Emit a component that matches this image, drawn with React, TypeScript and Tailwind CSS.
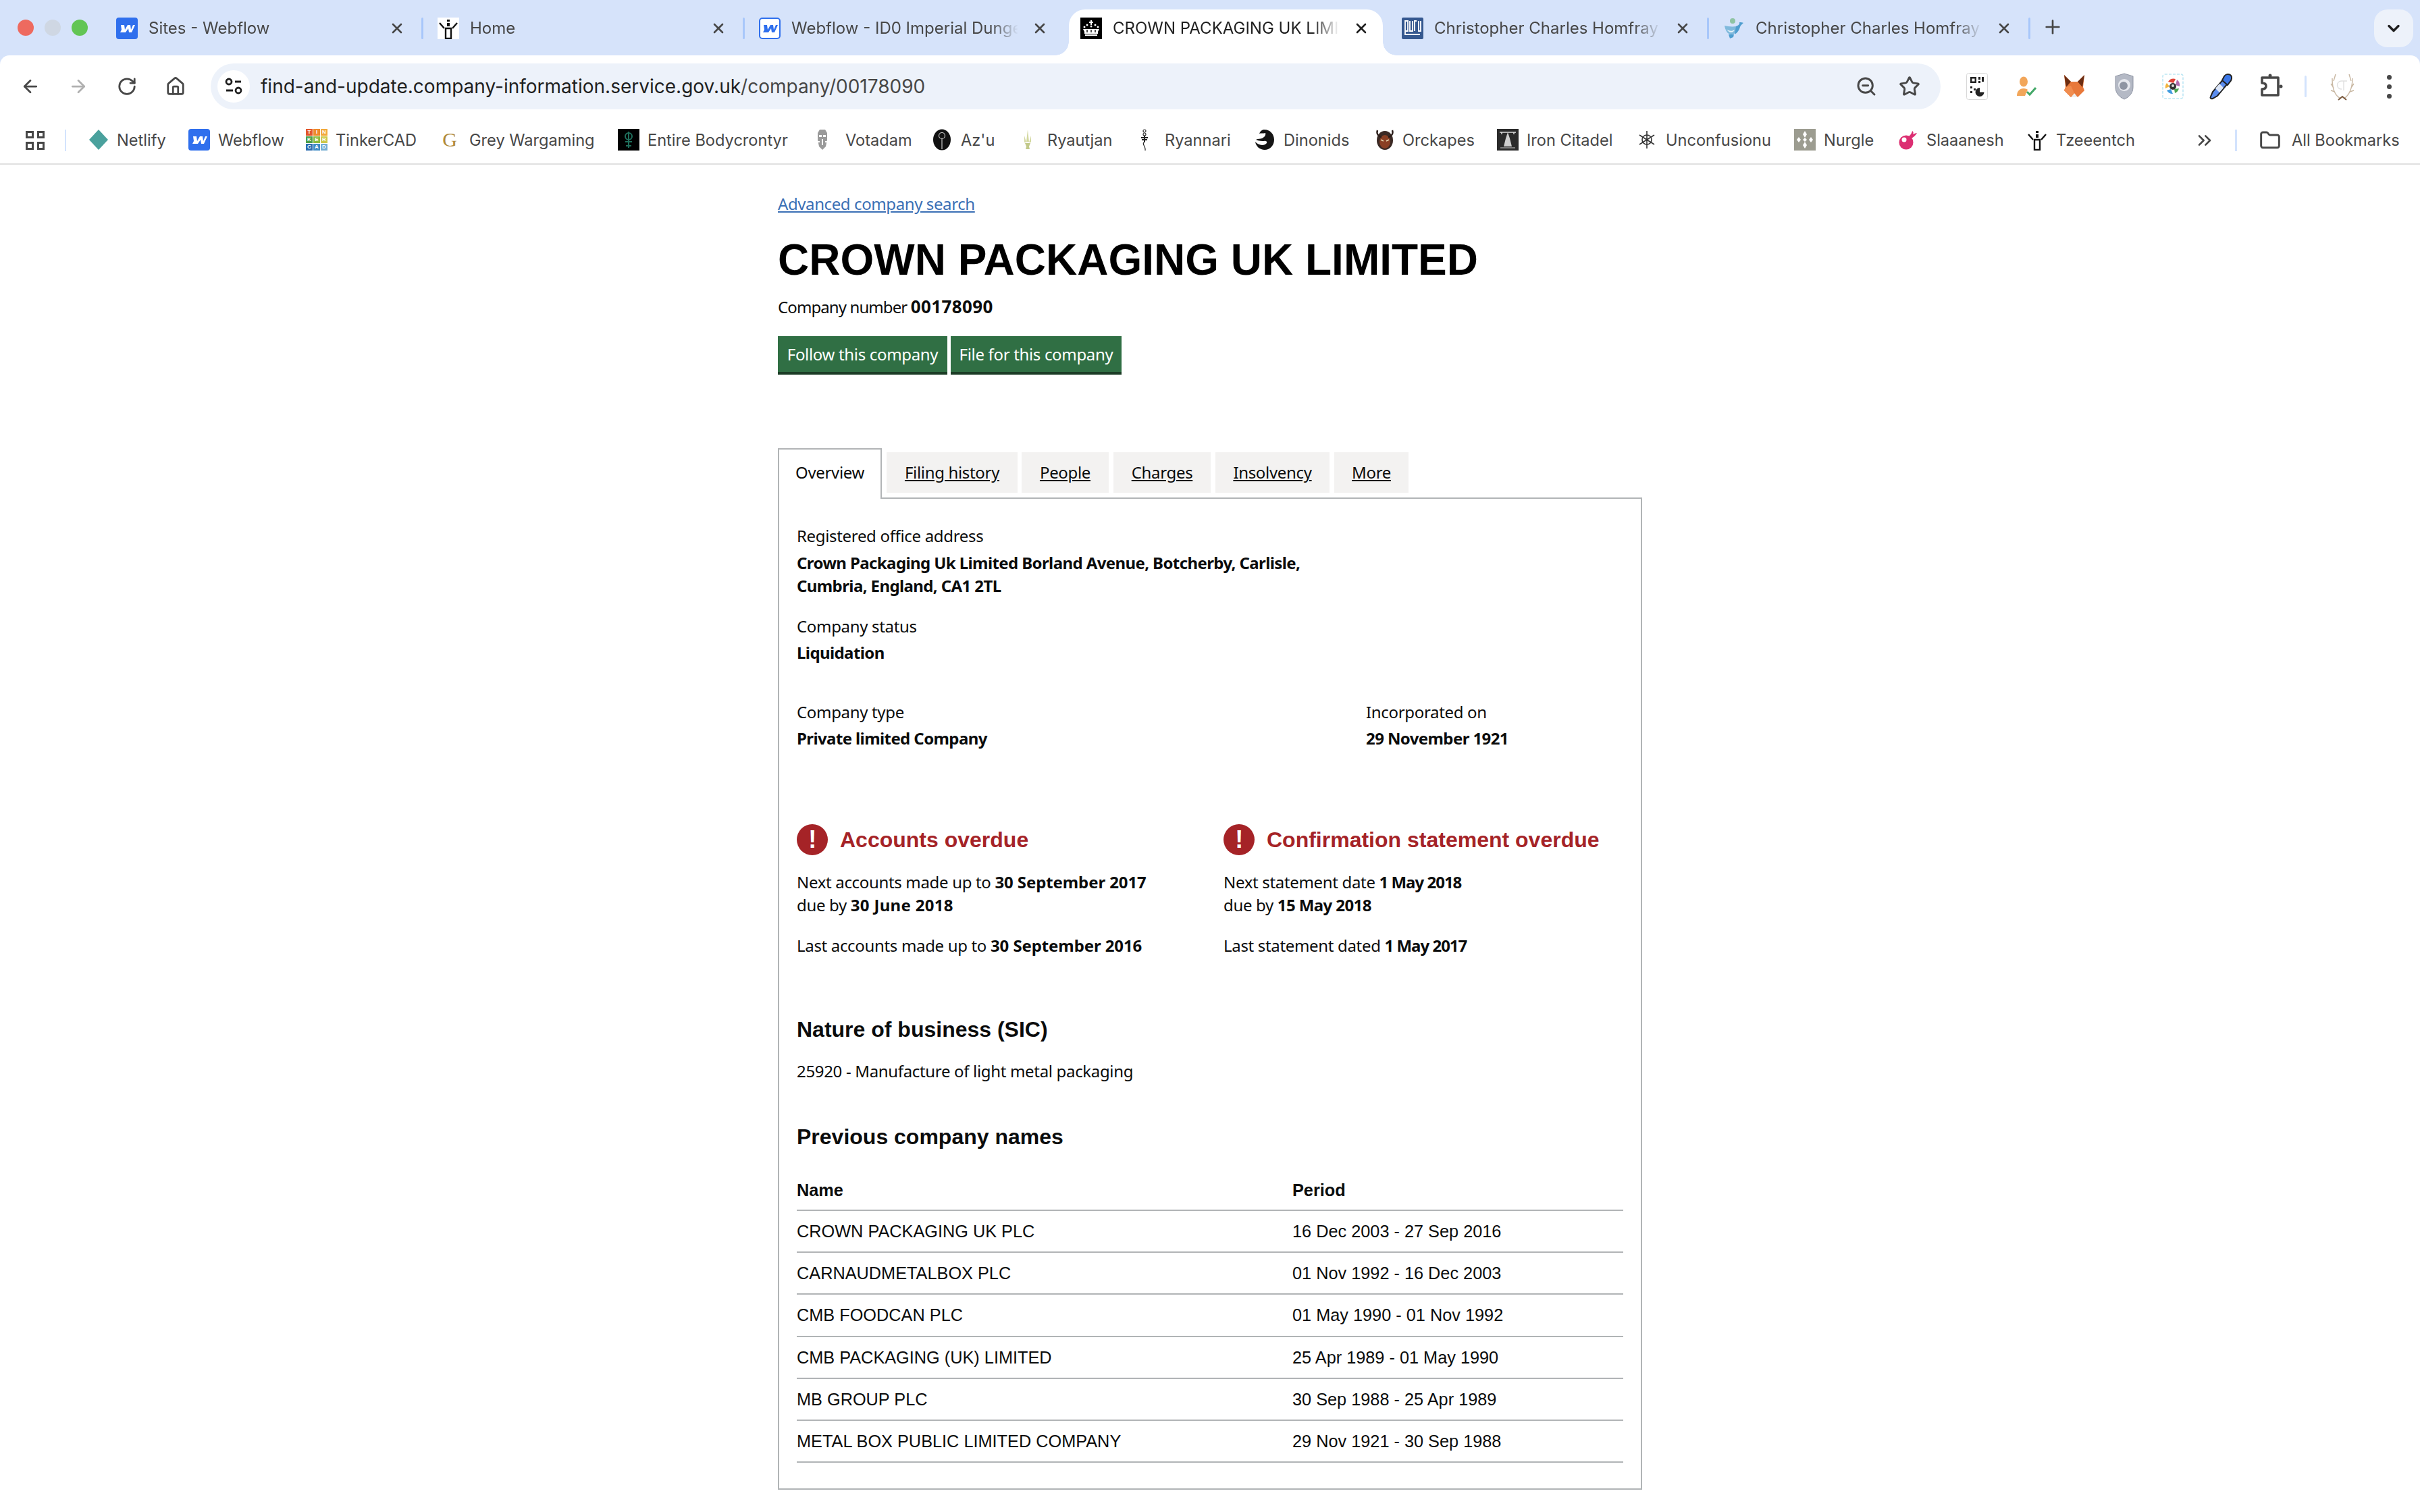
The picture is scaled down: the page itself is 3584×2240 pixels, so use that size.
import React from 'react';
import { ArrowLeft, ArrowRight, RotateCw, Home, X, Plus, ChevronDown, ZoomOut, Star, Folder, ChevronsRight } from 'lucide-react';

const WebflowIcon = ({ outlined = false }: { outlined?: boolean }) => (
  <svg viewBox="0 0 32 32" className="w-8 h-8 shrink-0">
    <rect x={outlined ? 1 : 0} y={outlined ? 1 : 0} width={outlined ? 30 : 32} height={outlined ? 30 : 32} rx="4" fill={outlined ? '#fff' : '#2f6fed'} stroke={outlined ? '#2f6fed' : 'none'} strokeWidth="2" />
    <path d="M7 11h5l1 7 4-7h4l1 7 3-7h3l-5 11h-4l-1-6-4 6H6l2-4z" fill={outlined ? '#2f6fed' : '#fff'} />
  </svg>
);

const TzeentchIcon = () => (
  <svg viewBox="0 0 32 32" className="w-8 h-8 shrink-0 bg-white">
    <path d="M3 8l7 8M29 8l-7 8" stroke="#111" strokeWidth="2.4" fill="none" />
    <path d="M11 16h10M12 16v15h8V16" stroke="#111" strokeWidth="2.4" fill="none" />
    <path d="M14 3h4v3h-4zM14 8h4v5h-4z" fill="#111" />
  </svg>
);

const CrownIcon = () => (
  <svg viewBox="0 0 32 32" className="w-8 h-8 shrink-0 bg-black">
    <path d="M15 4h2v2h2v2h-2v3h-2V8h-2V6h2z" fill="#fff" />
    <circle cx="6" cy="14" r="1.5" fill="#fff" /><circle cx="26" cy="14" r="1.5" fill="#fff" /><circle cx="10" cy="11" r="1.5" fill="#fff" /><circle cx="22" cy="11" r="1.5" fill="#fff" /><circle cx="16" cy="13" r="1.5" fill="#fff" />
    <path d="M4 17h24l-2 4v3H6v-3zM7 25h18v2H7z" fill="#fff" />
    <path d="M10 18v4M16 18v4M22 18v4" stroke="#000" strokeWidth="1.4" />
  </svg>
);

const GuruIcon = () => (
  <svg viewBox="0 0 32 32" className="w-8 h-8 shrink-0">
    <rect width="32" height="32" rx="2" fill="#35588f" />
    <path d="M5 5h4v15H5zM5 20v5h22M12 5v15h4V5M19 20V5h3M25 5v15h3V5" stroke="#fff" strokeWidth="1.8" fill="none" />
  </svg>
);

const WhaleIcon = () => (
  <svg viewBox="0 0 32 32" className="w-8 h-8 shrink-0">
    <circle cx="14" cy="5" r="4" fill="#8fc4a4" />
    <path d="M2 12c5 1 11 2 17 1 3 6-1 12-7 12C6 25 3 18 2 12z" fill="#7fb9dc" />
    <path d="M19 13c3-1 6-3 5-6 2 0 5 0 6 1-2 2-4 3-5 6-1 4-4 9-8 11z" fill="#4f9ecf" />
    <path d="M8 25l2 6 5-2 1-4z" fill="#4f9ecf" />
    <path d="M5 17c3 3 8 4 12 1-2 5-8 6-12-1z" fill="#e4f1f8" />
  </svg>
);

const NetlifyIcon = () => (
  <svg viewBox="0 0 32 32" className="w-8 h-8 shrink-0"><path d="M16 1l14 15-14 15L2 16z" fill="#4aa19d" /></svg>
);

const TinkerIcon = () => (
  <div className="w-8 h-8 shrink-0 grid grid-cols-3 grid-rows-3 gap-[1px] font-['Liberation_Sans',sans-serif] text-[8px] font-bold leading-[10px] text-white text-center">
    <span className="bg-[#e2572d]">T</span><span className="bg-[#ee8a2c]">I</span><span className="bg-[#f2a93b]">N</span>
    <span className="bg-[#4f9f4b]">K</span><span className="bg-[#8dbb3f]">E</span><span className="bg-[#cdc84a]">R</span>
    <span className="bg-[#2c6db0]">C</span><span className="bg-[#3f8cc6]">A</span><span className="bg-[#73add2]">D</span>
  </div>
);

const GreyIcon = () => (
  <span className="w-8 h-8 shrink-0 -ml-[5px] text-center font-['Liberation_Serif',serif] text-[30px] leading-[32px] text-[#b08a3a]">G</span>
);

const EntireIcon = () => (
  <svg viewBox="0 0 32 32" className="w-8 h-8 shrink-0 bg-black">
    <circle cx="16" cy="11" r="5" fill="none" stroke="#1f6f5c" strokeWidth="2" />
    <path d="M16 4v24M11 19h10M12 25h8" stroke="#1f6f5c" strokeWidth="2" />
  </svg>
);

const VotadamIcon = () => (
  <svg viewBox="0 0 32 32" className="w-8 h-8 shrink-0 -ml-[7px]">
    <path d="M12 1h8l3 5v10l-2 10-5 5-5-5-2-10V6z" fill="#9a9a9a" />
    <path d="M11 9h4v3h-4zM17 9h4v3h-4zM15 15h2v9h-2zM9 18h3v2H9zM20 18h3v2h-3z" fill="#fff" />
  </svg>
);

const AzuIcon = () => (
  <svg viewBox="0 0 32 32" className="w-8 h-8 shrink-0">
    <ellipse cx="16" cy="16" rx="13" ry="15.5" fill="#111" />
    <circle cx="16" cy="10" r="4.5" fill="none" stroke="#ccc" strokeWidth="1.2" />
    <path d="M16 14.5V30" stroke="#ccc" strokeWidth="1.2" />
  </svg>
);

const RyautjanIcon = () => (
  <svg viewBox="0 0 32 32" className="w-8 h-8 shrink-0 -ml-[5px]">
    <path d="M16 1l2 18h-4zM11 10l3 10h-3zM21 10l-3 10h3z" fill="#d3d8a0" />
    <path d="M12 21h8l-2 5 1 4h-6l1-4z" fill="#c2c98a" />
  </svg>
);

const RyannariIcon = () => (
  <svg viewBox="0 0 32 32" className="w-8 h-8 shrink-0 -ml-[12px]">
    <circle cx="16" cy="3" r="2" fill="none" stroke="#333" strokeWidth="1.2" />
    <circle cx="16" cy="8" r="2" fill="none" stroke="#333" strokeWidth="1.2" />
    <path d="M11 13h10M12 16h8M16 10v10" stroke="#222" strokeWidth="2" />
    <path d="M15 20c-3 3 3 5 2 12" fill="none" stroke="#222" strokeWidth="1.2" />
  </svg>
);

const DinonidsIcon = () => (
  <svg viewBox="0 0 32 32" className="w-8 h-8 shrink-0">
    <path d="M14 1c9-1 16 6 16 15 0 9-7 15-14 15C9 31 3 26 2 19c4 5 13 7 17 2 1-2-1-4-4-3-3 0-7 0-12-2 3-2 6-1 9-2 4-2 6-5 5-8-3 1-7 0-9 1 1-3 3-5 6-6z" fill="#151515" />
  </svg>
);

const OrckapesIcon = () => (
  <svg viewBox="0 0 32 32" className="w-8 h-8 shrink-0">
    <ellipse cx="16" cy="17" rx="12" ry="14" fill="#3b2a25" />
    <ellipse cx="16" cy="19" rx="8" ry="10" fill="#8a3f23" />
    <path d="M5 2c-2 6 2 9 6 10M27 2c2 6-2 9-6 10" stroke="#2a1d1a" strokeWidth="2.4" fill="none" />
    <path d="M10 16l4 2M22 16l-4 2" stroke="#e8d7b0" strokeWidth="1.6" />
  </svg>
);

const IronIcon = () => (
  <svg viewBox="0 0 32 32" className="w-8 h-8 shrink-0 bg-[#2b2b2b]">
    <path d="M4 5h24M7 5v3M25 5v3" stroke="#ddd" strokeWidth="1.5" />
    <path d="M16 5l3 9 3 12H10l3-12z" fill="#cfcfcf" />
    <path d="M5 28h22" stroke="#999" strokeWidth="1.5" />
  </svg>
);

const UnconfusIcon = () => (
  <svg viewBox="0 0 32 32" className="w-8 h-8 shrink-0 -ml-[4px]" stroke="#333" strokeWidth="1.6" fill="none">
    <path d="M16 3v26M5 9l22 14M27 9L5 23" />
    <circle cx="16" cy="16" r="7" />
  </svg>
);

const NurgleIcon = () => (
  <div className="w-8 h-8 shrink-0 bg-[#9c9c90] flex items-center justify-center">
    <svg viewBox="0 0 32 32" className="w-8 h-8" fill="#fff">
      <path d="M16 3l3 5-3 5-3-5zM16 19l3 5-3 5-3-5zM7 12l3 4-3 4-3-4zM25 12l3 4-3 4-3-4zM16 13l3 3-3 3-3-3z" />
    </svg>
  </div>
);

const SlaaneshIcon = () => (
  <svg viewBox="0 0 32 32" className="w-8 h-8 shrink-0">
    <circle cx="12" cy="20" r="10.5" fill="#dc2f72" />
    <circle cx="9" cy="16" r="3.5" fill="#fff" />
    <path d="M14 13c3-3 6-5 7-10 2 1 2 3 1 5 2-1 4-2 6-2-2 4-6 7-10 9z" fill="#dc2f72" />
  </svg>
);

const QrIcon = () => (
  <svg viewBox="0 0 32 40" className="w-8 h-10 shrink-0">
    <rect x=".5" y=".5" width="31" height="39" rx="3" fill="#fff" stroke="#d8d8d8" />
    <path d="M6 6h9v9H6zM8.500 8.500v4h4v-4zM18 6h3v4h-3zM23 6h3v7h-3zM18 12h3v3h-3zM6 20h3v3H6zM11 23h3v3h-3zM6 27h3v3H6zM15 28h3v3h-3z" fill="#222" fillRule="evenodd" />
    <path d="M20 22a6.500 6.500 0 1 0 6.500 6.500H20z" fill="#222" />
  </svg>
);

const PersonIcon = () => (
  <svg viewBox="0 0 32 32" className="w-8 h-8 shrink-0">
    <ellipse cx="12" cy="9" rx="6" ry="7.500" fill="#f2a65a" />
    <path d="M2 30c0-7 4-11 10-11 3 0 5 1 6 2l-4 9z" fill="#f2a65a" />
    <path d="M17 24l4 4 9-10" fill="none" stroke="#43a868" strokeWidth="3" />
  </svg>
);

const FoxIcon = () => (
  <svg viewBox="0 0 32 36" className="w-8 h-9 shrink-0">
    <path d="M1 1l10 10h10L31 1l-2 18 2 5-10 10h-10L1 24l2-5z" fill="#e8783a" />
    <path d="M1 1l10 10-7 8zM31 1L21 11l7 8z" fill="#6b2d13" />
    <path d="M11 34l5-6 5 6z" fill="#eee" />
    <path d="M3 19l8-2 5 11-5 6L1 24z" fill="#f08c4f" />
  </svg>
);

const ShieldIcon = () => (
  <svg viewBox="0 0 28 40" className="w-[28px] h-10 shrink-0">
    <path d="M14 1l13 4v16c0 9-6 15-13 18C7 36 1 30 1 21V5z" fill="#b4b9c5" stroke="#8e94a3" />
    <circle cx="14" cy="18" r="9" fill="#e6e8ee" />
    <circle cx="13" cy="19" r="6" fill="#8f95a3" />
  </svg>
);

const LensIcon = () => (
  <svg viewBox="0 0 32 40" className="w-8 h-10 shrink-0">
    <rect x="1" y="2" width="30" height="36" rx="3" fill="none" stroke="#bde7f4" strokeWidth="1.6" strokeDasharray="4 2" />
    <path d="M9 13a10 10 0 0 1 11-4l-3 6z" fill="#e0453a" />
    <path d="M22 10a10 10 0 0 1 4 10l-6-2z" fill="#b06bb0" />
    <path d="M25 23a10 10 0 0 1-6 7l-1-6z" fill="#4aa755" />
    <path d="M16 31a10 10 0 0 1-9-5l6-2z" fill="#3f9bdf" />
    <path d="M5 23a10 10 0 0 1 2-8l4 5z" fill="#f2b540" />
    <circle cx="16" cy="20" r="5" fill="#333" /><circle cx="16" cy="19" r="2" fill="#ddd" />
  </svg>
);

const DropperIcon = () => (
  <svg viewBox="0 0 34 40" className="w-[34px] h-10 shrink-0">
    <path d="M21 9l6 7L12 34l-7 4c-3 1-4-1-3-3l3-7z" fill="#5b8def" stroke="#222" strokeWidth="2" />
    <path d="M15 16l6 6-6 7-6-6z" fill="#dce6f8" />
    <path d="M19 11l8 7 3-4c4-4 4-9 1-11s-7-1-9 2z" fill="#3c78e8" stroke="#222" strokeWidth="2" />
  </svg>
);

const ExtensionsIcon = () => (
  <svg viewBox="0 0 36 40" className="w-9 h-10 shrink-0" fill="none" stroke="#474747" strokeWidth="3.600" strokeLinejoin="round">
    <path d="M4 7h24v26H4V24c4 0 6-2 6-4.500S8 15 4 15z" />
    <circle cx="16" cy="4" r="2.500" fill="#474747" stroke="none" />
    <circle cx="32" cy="20" r="2.500" fill="#474747" stroke="none" />
  </svg>
);

const AntlerIcon = () => (
  <svg viewBox="0 0 36 44" className="w-9 h-11 shrink-0" fill="none">
    <path d="M16 40C6 36 3 24 3 10M5 24l-4-6M7 30L1 28M5 14l3-10M20 40c8-4 13-16 13-30M31 24l4-6M29 30l6-2M31 14l-3-10" stroke="#c9b8a3" strokeWidth="1.400" />
    <path d="M12 42l6-5 6 5" stroke="#7a5a3e" strokeWidth="2" />
    <path d="M16 14a6 6 0 1 0 1 12M16 14h9M20 14v14" stroke="#e0e0e0" strokeWidth="1.400" />
  </svg>
);

const TuneIcon = () => (
  <svg viewBox="0 0 48 48" className="w-12 h-12" fill="none" stroke="#1f1f1f" strokeWidth="2.800">
    <circle cx="17" cy="17" r="4" />
    <path d="M26 17h9M13 30h10" />
    <circle cx="31" cy="30" r="4" />
  </svg>
);

const tabs = [
  { title: 'Sites - Webflow', icon: <WebflowIcon /> },
  { title: 'Home', icon: <TzeentchIcon /> },
  { title: 'Webflow - ID0 Imperial Dungeon', icon: <WebflowIcon outlined /> },
  { title: 'CROWN PACKAGING UK LIMITED', icon: <CrownIcon />, active: true },
  { title: 'Christopher Charles Homfray', icon: <GuruIcon /> },
  { title: 'Christopher Charles Homfray', icon: <WhaleIcon /> },
];

const bookmarks = [
  { label: 'Netlify', icon: <NetlifyIcon />, cls: 'w-[149px] gap-[11px]' },
  { label: 'Webflow', icon: <WebflowIcon />, cls: 'w-[174px] gap-[12px]' },
  { label: 'TinkerCAD', icon: <TinkerIcon />, cls: 'w-[202px] gap-[12px]' },
  { label: 'Grey Wargaming', icon: <GreyIcon />, cls: 'w-[260px] gap-[13px]' },
  { label: 'Entire Bodycrontyr', icon: <EntireIcon />, cls: 'w-[294px] gap-[12px]' },
  { label: 'Votadam', icon: <VotadamIcon />, cls: 'w-[170px] gap-[18px]' },
  { label: "Az'u", icon: <AzuIcon />, cls: 'w-[132px] gap-[12px]' },
  { label: 'Ryautjan', icon: <RyautjanIcon />, cls: 'w-[180px] gap-[13px]' },
  { label: 'Ryannari', icon: <RyannariIcon />, cls: 'w-[166px] gap-[14px]' },
  { label: 'Dinonids', icon: <DinonidsIcon />, cls: 'w-[178px] gap-[12px]' },
  { label: 'Orckapes', icon: <OrckapesIcon />, cls: 'w-[182px] gap-[10px]' },
  { label: 'Iron Citadel', icon: <IronIcon />, cls: 'w-[210px] gap-[12px]' },
  { label: 'Unconfusionu', icon: <UnconfusIcon />, cls: 'w-[230px] gap-[12px]' },
  { label: 'Nurgle', icon: <NurgleIcon />, cls: 'w-[154px] gap-[12px]' },
  { label: 'Slaaanesh', icon: <SlaaneshIcon />, cls: 'w-[190px] gap-[10px]' },
  { label: 'Tzeeentch', icon: <TzeentchIcon />, cls: 'w-[248px] gap-[12px]' },
];

const previousNames = [
  ['CROWN PACKAGING UK PLC', '16 Dec 2003 - 27 Sep 2016'],
  ['CARNAUDMETALBOX PLC', '01 Nov 1992 - 16 Dec 2003'],
  ['CMB FOODCAN PLC', '01 May 1990 - 01 Nov 1992'],
  ['CMB PACKAGING (UK) LIMITED', '25 Apr 1989 - 01 May 1990'],
  ['MB GROUP PLC', '30 Sep 1988 - 25 Apr 1989'],
  ['METAL BOX PUBLIC LIMITED COMPANY', '29 Nov 1921 - 30 Sep 1988'],
];

const pageTabs = [
  { label: 'Filing history', cls: 'w-[194px] ml-[7px]' },
  { label: 'People', cls: 'w-[129px] ml-[6px]' },
  { label: 'Charges', cls: 'w-[144px] ml-[7px]' },
  { label: 'Insolvency', cls: 'w-[169px] ml-[7px]' },
  { label: 'More', cls: 'w-[110px] ml-[7px]' },
];

const WarnIcon = () => (
  <span className="w-[46px] h-[46px] shrink-0 rounded-full bg-[#a52327] flex items-center justify-center text-white font-['Liberation_Sans',sans-serif] font-bold text-[36px] leading-none">!</span>
);

const bodyFont = "font-['Noto_Sans',sans-serif] text-[24px] leading-[34px] tracking-[-0.33px] text-[#0b0c0c]";
const strongTight = 'font-bold tracking-[-0.6px]';
const strongWide = 'font-bold tracking-[-0.1px]';

function OverdueBlock({ title, next, due, last }: { title: string; next: React.ReactNode; due: React.ReactNode; last: React.ReactNode }) {
  return (
    <div>
      <div className="flex items-center h-[46px] gap-[18px]">
        <WarnIcon />
        <h2 className="font-['Liberation_Sans',sans-serif] font-bold text-[32px] tracking-normal text-[#a52327]">{title}</h2>
      </div>
      <p className="mt-[23px]">{next}</p>
      <p>{due}</p>
      <p className="mt-[26px]">{last}</p>
    </div>
  );
}

export default function App() {
  return (
    <div className="w-[3584px] h-[2240px] overflow-hidden bg-white">
      <div className="bg-[#d6e3fa]">
        {/* tab strip */}
        <div className="relative h-[82px] flex">
          <div className="w-[148px] shrink-0 flex items-center pl-[26px] gap-[16px]">
            <span className="w-6 h-6 rounded-full bg-[#ee6a5f]" />
            <span className="w-6 h-6 rounded-full bg-[#cfd7e3]" />
            <span className="w-6 h-6 rounded-full bg-[#62c554]" />
          </div>
          {tabs.map((tab, i) => (
            <div key={i} className="relative w-[476px] shrink-0 h-[82px] flex items-center pl-[24px] pt-[2px]">
              {tab.active && (
                <>
                  <div className="absolute left-[7px] right-[4px] top-[14px] bottom-0 bg-white rounded-t-[24px]" />
                  <div className="absolute left-[-13px] bottom-0 w-[20px] h-[20px] bg-[radial-gradient(circle_at_0_0,#d6e3fa_19.5px,#fff_20px)]" />
                  <div className="absolute right-[-16px] bottom-0 w-[20px] h-[20px] bg-[radial-gradient(circle_at_100%_0,#d6e3fa_19.5px,#fff_20px)]" />
                </>
              )}
              <div className="relative flex items-center">
                {tab.icon}
                <span className={`ml-[16px] w-[336px] overflow-hidden whitespace-nowrap font-['Inter',sans-serif] text-[24px] leading-[32px] [mask-image:linear-gradient(to_right,#000_88%,transparent)] ${tab.active ? 'text-[#1f1f1f]' : 'text-[#474747]'}`}>{tab.title}</span>
                <X className={`ml-[20px] w-6 h-6 ${tab.active ? 'text-[#1f1f1f]' : 'text-[#474747]'}`} strokeWidth={2.6} />
                {i < tabs.length - 1 && !tab.active && tabs[i + 1]?.active !== true ? (
                  <span className="ml-[24px] w-[3px] h-[32px] rounded bg-[#a8c7fa]" />
                ) : null}
                {i === tabs.length - 1 && <span className="ml-[24px] w-[3px] h-[32px] rounded bg-[#a8c7fa]" />}
              </div>
            </div>
          ))}
          <Plus className="ml-[20px] mt-[24px] w-8 h-8 text-[#474747]" strokeWidth={2} />
          <div className="absolute right-[10px] top-[14px] w-[58px] h-[56px] rounded-[20px] bg-[#edf2fa] flex items-center justify-center">
            <ChevronDown className="w-7 h-7 text-[#1f1f1f]" strokeWidth={3} />
          </div>
        </div>

        {/* address bar */}
        <div className="relative h-[82px] bg-white rounded-t-[14px] flex items-center pt-[10px] pl-[30px]">
          <ArrowLeft className="w-[30px] h-[30px] text-[#474747]" strokeWidth={2.2} />
          <ArrowRight className="ml-[41px] w-[30px] h-[30px] text-[#b0b0b0]" strokeWidth={2.2} />
          <RotateCw className="ml-[42px] w-[30px] h-[30px] text-[#474747]" strokeWidth={2.2} />
          <Home className="ml-[42px] w-[30px] h-[30px] text-[#474747]" strokeWidth={2.2} />
          <div className="ml-[37px] w-[2562px] h-[68px] rounded-full bg-[#edf2fa] flex items-center pl-[10px]">
            <span className="w-12 h-12 rounded-full bg-white flex items-center justify-center">
              <TuneIcon />
            </span>
            <span className="ml-[16px] font-['Inter',sans-serif] text-[28px] text-[#1f1f1f] whitespace-nowrap">
              find-and-update.company-information.service.gov.uk<span className="text-[#474747]">/company/00178090</span>
            </span>
            <div className="ml-auto flex items-center gap-[32px] pr-[30px]">
              <ZoomOut className="w-8 h-8 text-[#474747]" strokeWidth={2.2} />
              <Star className="w-8 h-8 text-[#474747]" strokeWidth={2.2} />
            </div>
          </div>
          <div className="ml-[38px] flex items-center">
            <QrIcon />
            <div className="ml-[41px]"><PersonIcon /></div>
            <div className="ml-[39px]"><FoxIcon /></div>
            <div className="ml-[44px]"><ShieldIcon /></div>
            <div className="ml-[42px]"><LensIcon /></div>
            <div className="ml-[38px]"><DropperIcon /></div>
            <div className="ml-[40px]"><ExtensionsIcon /></div>
            <span className="ml-[31px] w-[3px] h-[32px] rounded bg-[#d3e3fd]" />
            <div className="ml-[35px]"><AntlerIcon /></div>
            <div className="ml-[48px] flex flex-col gap-[7px]">
              <span className="w-[7px] h-[7px] rounded-full bg-[#474747]" />
              <span className="w-[7px] h-[7px] rounded-full bg-[#474747]" />
              <span className="w-[7px] h-[7px] rounded-full bg-[#474747]" />
            </div>
          </div>
        </div>
      </div>

      {/* bookmarks */}
      <div className="h-[80px] bg-white border-b-2 border-[#e0e0e0] flex items-center pl-[38px] pt-[9px] font-['Inter',sans-serif] text-[23.6px] text-[#474747] whitespace-nowrap">
        <div className="w-[28px] h-[28px] grid grid-cols-2 gap-[5px]">
          <span className="border-[3px] border-[#474747]" />
          <span className="border-[3px] border-[#474747]" />
          <span className="border-[3px] border-[#474747]" />
          <span className="border-[3px] border-[#474747]" />
        </div>
        <span className="ml-[30px] mr-[32px] w-[2px] h-[32px] bg-[#d3e3fd]" />
        {bookmarks.map((b) => (
          <div key={b.label} className={`${b.cls} shrink-0 flex items-center`}>
            {b.icon}
            <span>{b.label}</span>
          </div>
        ))}
        <ChevronsRight className="w-8 h-8 text-[#474747]" strokeWidth={2} />
        <span className="ml-[29px] w-[3px] h-[32px] bg-[#d3e3fd]" />
        <Folder className="ml-[33px] w-8 h-8 text-[#474747]" strokeWidth={2.2} />
        <span className="ml-[16px]">All Bookmarks</span>
      </div>

      {/* page */}
      <main className={`w-[1280px] mx-auto pt-[42px] ${bodyFont}`}>
        <a className="block leading-[32px] tracking-[-0.4px] text-[#3a6fb5] underline">Advanced company search</a>
        <h1 className="mt-[31px] font-['Liberation_Sans',sans-serif] font-bold text-[64px] leading-[72px] tracking-normal text-black">CROWN PACKAGING UK LIMITED</h1>
        <p className="mt-[17px] leading-[32px] tracking-[-0.9px]">Company number <strong className="font-bold text-[26px] tracking-[0.4px]">00178090</strong></p>
        <div className="mt-[27px] flex gap-[5px]">
          <button className="w-[251px] h-[53px] mb-[4px] bg-[#306f44] text-white shadow-[0_4px_0_#1c3d26]">Follow this company</button>
          <button className="w-[253px] h-[53px] mb-[4px] bg-[#306f44] text-white shadow-[0_4px_0_#1c3d26]">File for this company</button>
        </div>

        <div className="mt-[109px] h-[73px] flex items-start relative">
          <div className="relative z-10 w-[154px] h-[75px] bg-white border-2 border-b-0 border-[#b1b4b6] flex items-center justify-center pb-[6px]">Overview</div>
          {pageTabs.map((t) => (
            <div key={t.label} className={`${t.cls} mt-[6px] h-[60px] bg-[#f3f2f1] flex items-center justify-center underline`}>{t.label}</div>
          ))}
        </div>

        <section className="border-2 border-[#b1b4b6] px-[26px] pt-[38px] pb-[38px]">
          <p>Registered office address</p>
          <p className={`mt-[6px] w-[800px] ${strongTight}`}>Crown Packaging Uk Limited Borland Avenue, Botcherby, Carlisle, Cumbria, England, CA1 2TL</p>
          <p className="mt-[26px]">Company status</p>
          <p className={`mt-[5px] ${strongTight}`}>Liquidation</p>
          <div className="mt-[54px] grid grid-cols-[843px_1fr]">
            <div>
              <p>Company type</p>
              <p className={`mt-[5px] ${strongTight}`}>Private limited Company</p>
            </div>
            <div>
              <p>Incorporated on</p>
              <p className={`mt-[5px] ${strongTight}`}>29 November 1921</p>
            </div>
          </div>

          <div className="mt-[110px] grid grid-cols-[632px_1fr]">
            <OverdueBlock
              title="Accounts overdue"
              next={<>Next accounts made up to <strong className={strongWide}>30 September 2017</strong></>}
              due={<>due by <strong className="font-bold tracking-[0.3px]">30 June 2018</strong></>}
              last={<>Last accounts made up to <strong className={strongWide}>30 September 2016</strong></>}
            />
            <OverdueBlock
              title="Confirmation statement overdue"
              next={<>Next statement date <strong className="font-bold tracking-[-1px]">1 May 2018</strong></>}
              due={<>due by <strong className={strongTight}>15 May 2018</strong></>}
              last={<>Last statement dated <strong className="font-bold tracking-[-1px]">1 May 2017</strong></>}
            />
          </div>

          <h2 className="mt-[87px] font-['Liberation_Sans',sans-serif] font-bold text-[32px] leading-[40px] tracking-normal">Nature of business (SIC)</h2>
          <p className="mt-[25px]">25920 - Manufacture of light metal packaging</p>

          <h2 className="mt-[60px] font-['Liberation_Sans',sans-serif] font-bold text-[32px] leading-[40px] tracking-normal">Previous company names</h2>

          <div className="mt-[27px] font-['Liberation_Sans',sans-serif] text-[25.3px] tracking-normal">
            <div className="h-[63px] border-b-2 border-[#b1b4b6] grid grid-cols-[734px_1fr] items-center font-bold pt-[2px]">
              <span>Name</span>
              <span>Period</span>
            </div>
            {previousNames.map(([name, period]) => (
              <div key={name} className="h-[62.2px] border-b-2 border-[#b1b4b6] grid grid-cols-[734px_1fr] items-center">
                <span>{name}</span>
                <span>{period}</span>
              </div>
            ))}
          </div>
        </section>
      </main>
    </div>
  );
}
